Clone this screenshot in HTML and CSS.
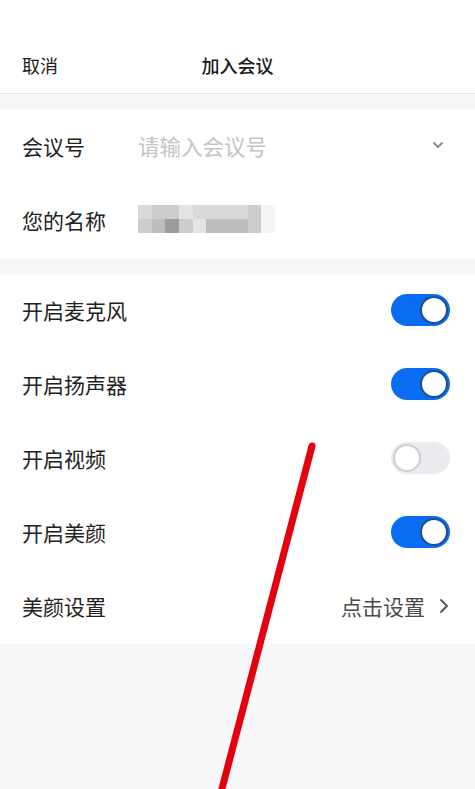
FILE: index.html
```html
<!DOCTYPE html>
<html lang="zh-CN">
<head>
<meta charset="utf-8">
<title>加入会议</title>
<link rel="stylesheet" href="styles.css">
</head>
<body>
<div class="page">
  <header class="nav">
    <span class="nav-cancel">取消</span>
    <span class="nav-title">加入会议</span>
  </header>

  <section class="group">
    <div class="row">
      <span class="label">会议号</span>
      <span class="placeholder">请输入会议号</span>
      <svg class="chev-down" width="12" height="8" viewBox="0 0 12 8"><path d="M2 2 L6 6 L10 2" fill="none" stroke="#8a8a8a" stroke-width="1.8" stroke-linecap="round" stroke-linejoin="round"/></svg>
    </div>
    <div class="row">
      <span class="label">您的名称</span>
      <div class="mosaic">
        <i class="m2"></i><i class="m3"></i><i class="m3"></i><i class="m1"></i><i class="m2"></i><i class="m2"></i><i class="m2"></i><i class="m2"></i><i class="m3"></i><i class="m0"></i>
        <i class="m3"></i><i class="m4"></i><i class="m5"></i><i class="m3"></i><i class="m1"></i><i class="m4"></i><i class="m4"></i><i class="m4"></i><i class="m3"></i><i class="m0"></i>
      </div>
    </div>
  </section>

  <section class="group second">
    <div class="row">
      <span class="label">开启麦克风</span>
      <span class="switch on"><span class="knob"></span></span>
    </div>
    <div class="row">
      <span class="label">开启扬声器</span>
      <span class="switch on"><span class="knob"></span></span>
    </div>
    <div class="row">
      <span class="label">开启视频</span>
      <span class="switch off"><span class="knob"></span></span>
    </div>
    <div class="row">
      <span class="label">开启美颜</span>
      <span class="switch on"><span class="knob"></span></span>
    </div>
    <div class="row">
      <span class="label">美颜设置</span>
      <span class="link">点击设置</span>
      <svg class="chev-right" width="10" height="16" viewBox="0 0 10 16"><path d="M2 2 L8 8 L2 14" fill="none" stroke="#555" stroke-width="1.8" stroke-linecap="round" stroke-linejoin="round"/></svg>
    </div>
  </section>

  <svg class="annotation" width="475" height="789" viewBox="0 0 475 789">
    <line x1="312" y1="446" x2="219" y2="800" stroke="#e5000f" stroke-width="7" stroke-linecap="round"/>
  </svg>
</div>
</body>
</html>
```

FILE: styles.css
```css
* { box-sizing: border-box; }
html, body {
  margin: 0;
  padding: 0;
  background: #f6f7f9;
}
body {
  font-family: "Noto Sans CJK SC", "Noto Sans", sans-serif;
  color: #222;
}
.page {
  position: relative;
  width: 475px;
  height: 789px;
  overflow: hidden;
  background: #f6f7f9;
}
.nav {
  position: relative;
  height: 94px;
  background: #fff;
  border-bottom: 1px solid #e4e4e6;
  padding: 53px 22px 0;
  display: flex;
  align-items: flex-start;
}
.nav-cancel {
  font-size: 18px;
  line-height: 24px;
  color: #222;
}
.nav-title {
  position: absolute;
  left: 0;
  right: 0;
  top: 53px;
  text-align: center;
  font-size: 18px;
  line-height: 24px;
  font-weight: 500;
  color: #1a1a1a;
  pointer-events: none;
}
.group {
  margin-top: 16px;
  background: #fff;
}
.row {
  height: 74px;
  display: flex;
  align-items: center;
  padding: 0 25px 3px 22px;
}
.label {
  font-size: 21px;
  line-height: 28px;
  color: #222;
  width: 116px;
  flex: none;
  white-space: nowrap;
}
.placeholder {
  flex: 1;
  font-size: 21.5px;
  line-height: 28px;
  color: #c4c4c6;
}
.chev-down {
  margin-right: 6px;
  margin-top: -2px;
}
.mosaic {
  display: grid;
  grid-template-columns: repeat(10, 13.7px);
  grid-template-rows: 14px 14px;
  margin-top: -1px;
}
.mosaic i { display: block; }
.m0 { background: #f4f4f4; }
.m1 { background: #e4e4e4; }
.m2 { background: #d9d9d9; }
.m3 { background: #cdcdcd; }
.m4 { background: #bdbdbd; }
.m5 { background: #9c9c9c; }
.switch {
  margin-left: auto;
  width: 59px;
  height: 32px;
  border-radius: 16px;
  display: flex;
  align-items: center;
  padding: 2px;
  flex: none;
}
.switch.on {
  background: #0a6cf2;
  justify-content: flex-end;
}
.switch.off {
  background: #ebebef;
  justify-content: flex-start;
}
.knob {
  width: 28px;
  height: 28px;
  border-radius: 50%;
  background: #fff;
}
.switch.on .knob {
  border: 2px solid #1d4f96;
}
.switch.off .knob {
  border: 2px solid #cfcfd3;
}
.link {
  margin-left: auto;
  font-size: 21px;
  line-height: 28px;
  color: #4a4a4a;
}
.chev-right {
  margin-left: 14px;
  margin-right: 1px;
}
.annotation {
  position: absolute;
  left: 0;
  top: 0;
  pointer-events: none;
}
```
